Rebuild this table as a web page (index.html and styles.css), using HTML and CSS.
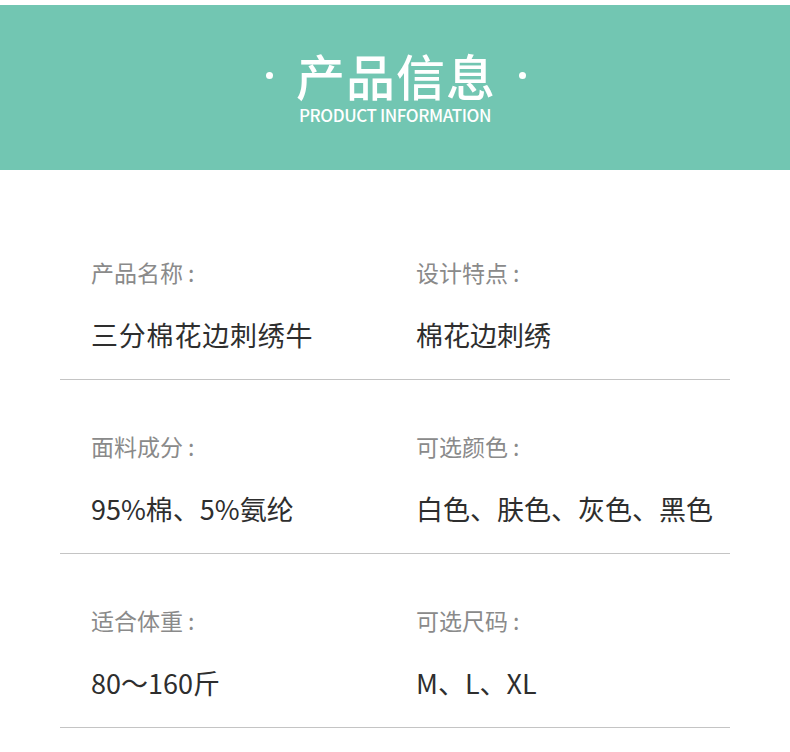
FILE: index.html
```html
<!DOCTYPE html>
<html lang="zh">
<head>
<meta charset="utf-8">
<link rel="stylesheet" href="styles.css">
</head>
<body>
<div class="page">
  <header class="banner">
    <div class="title-row">
      <span class="dot"></span>
      <h1 class="title">产品信息</h1>
      <span class="dot"></span>
    </div>
    <div class="subtitle">PRODUCT INFORMATION</div>
  </header>
  <main class="info">
    <div class="row">
      <div class="cell"><div class="label">产品名称<span class="colon">:</span></div><div class="value wide">三分棉花边刺绣牛</div></div>
      <div class="cell"><div class="label">设计特点<span class="colon">:</span></div><div class="value">棉花边刺绣</div></div>
    </div>
    <div class="row">
      <div class="cell"><div class="label">面料成分<span class="colon">:</span></div><div class="value">95%棉、5%氨纶</div></div>
      <div class="cell"><div class="label">可选颜色<span class="colon">:</span></div><div class="value">白色、肤色、灰色、黑色</div></div>
    </div>
    <div class="row">
      <div class="cell"><div class="label">适合体重<span class="colon">:</span></div><div class="value">80～160斤</div></div>
      <div class="cell"><div class="label">可选尺码<span class="colon">:</span></div><div class="value">M、L、XL</div></div>
    </div>
  </main>
</div>
</body>
</html>
```
FILE: styles.css
```css
* { box-sizing: border-box; margin: 0; padding: 0; }
html, body { background: #fff; }
body {
  font-family: "Noto Sans CJK SC", "Noto Sans", sans-serif;
  width: 790px;
  height: 752px;
  overflow: hidden;
}
.page { padding-top: 5px; }
.banner {
  background: #72c6b2;
  height: 165px;
  display: flex;
  flex-direction: column;
  align-items: center;
  padding-top: 45px;
  color: #fff;
}
.title-row {
  display: flex;
  align-items: center;
  gap: 23px;
  height: 50px;
  margin-left: 2px;
}
.dot {
  width: 7px;
  height: 7px;
  border-radius: 50%;
  background: #fff;
}
.title {
  font-size: 49px;
  font-weight: 500;
  line-height: 50px;
  letter-spacing: 1px;
}
.subtitle {
  font-size: 17px;
  font-weight: 500;
  line-height: 18px;
  margin-top: 6px;
  letter-spacing: -0.4px;
}
.info {
  margin: 36px 60px 0;
}
.row {
  display: grid;
  grid-template-columns: 325px 1fr;
  padding: 51px 0 27px 31px;
  border-bottom: 1px solid #c4c4c4;
}
.label {
  font-size: 23px;
  line-height: 30px;
  color: #8a8a8a;
}
.colon { margin-left: 5px; }
.value {
  margin-top: 31px;
  font-size: 27px;
  line-height: 34px;
  color: #2e2e2e;
}
.value.wide { letter-spacing: 0.8px; }
```
